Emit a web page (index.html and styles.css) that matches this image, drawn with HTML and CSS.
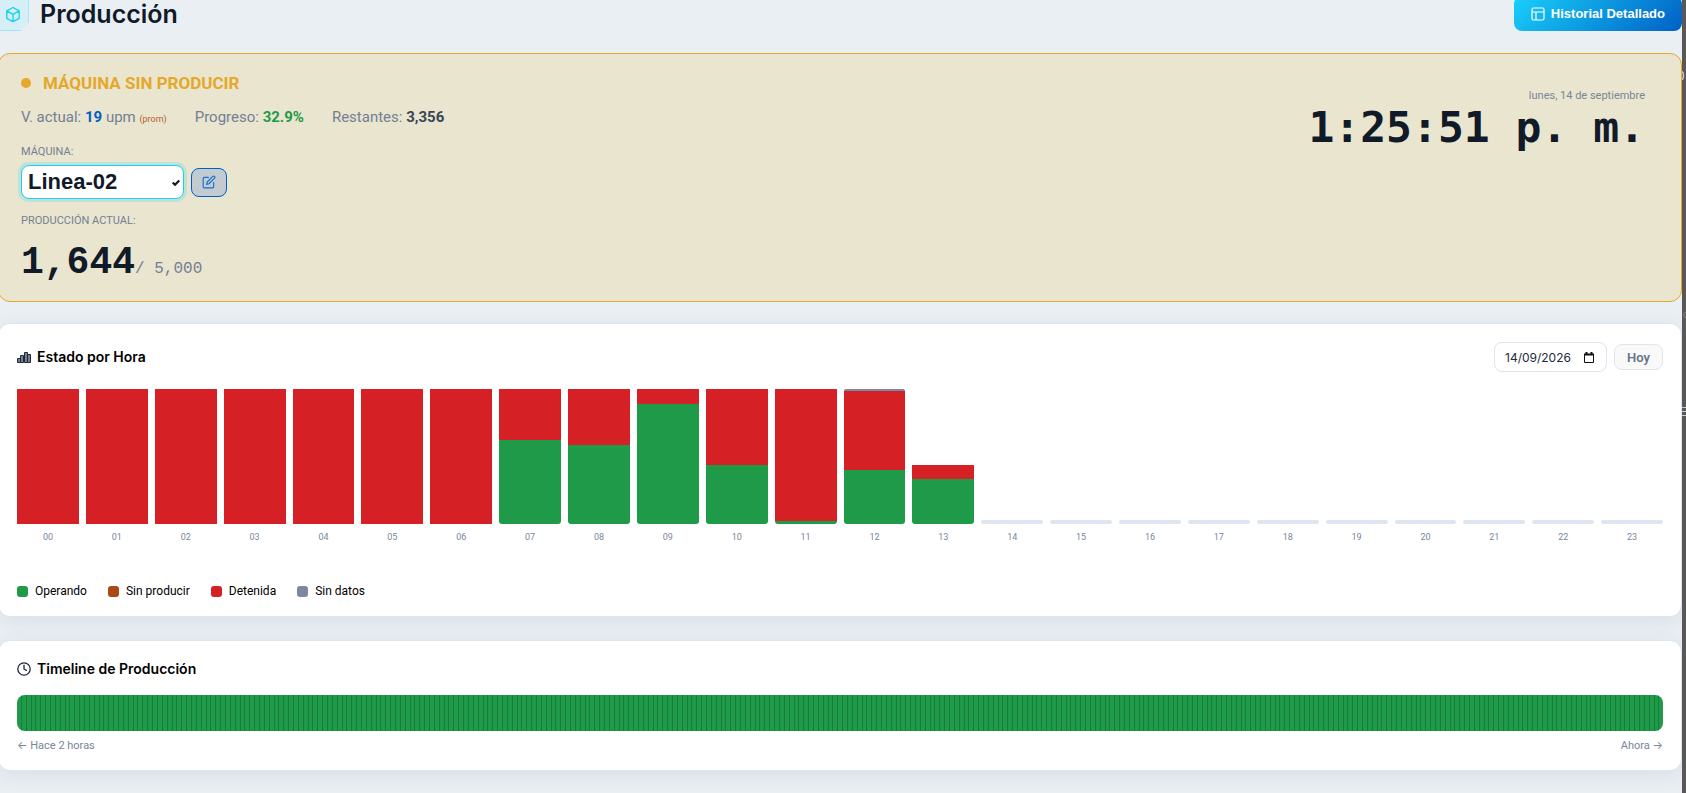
FILE: index.html
```html
<!DOCTYPE html>
<html lang="es">
<head>
<meta charset="utf-8">
<title>Producción</title>
<link rel="stylesheet" href="styles.css">
</head>
<body>
<main class="page">
  <header class="topbar">
    <div class="brand">
      <svg class="brand-icon" width="38" height="38" viewBox="0 0 38 38" fill="none" aria-hidden="true">
        <path d="M8 .5H37.5V30L30 37.5H.5V8z" fill="#d6eef5"/>
        <path d="M8 .5H37.5V30M30 37.5H.5V8" stroke="#a2e6f5"/>
        <g stroke="#1ad0f5" stroke-width="1.4" stroke-linejoin="round" stroke-linecap="round">
          <path d="M22 14.500l6.200 3.400v7.400L22 28.600l-6.200-3.300v-7.400zM15.800 17.900L22 21.400l6.200-3.500M22 21.400v7.200"/>
        </g>
      </svg>
      <h1>Producción</h1>
    </div>
    <a class="history" href="#historial">
      <svg width="14" height="14" viewBox="0 0 14 14" fill="none" stroke="currentColor" stroke-width="1.2" aria-hidden="true"><rect x="1" y="1" width="12" height="12" rx="1.5"/><path d="M1 5h12M5 5v8"/></svg>
      Historial Detallado
    </a>
  </header>

  <section class="card status">
    <div class="status-main">
      <p class="state"><span class="dot"></span>MÁQUINA SIN PRODUCIR</p>
      <div class="stats">
        <span>V. actual: <b class="blue">19</b> upm <small>(prom)</small></span>
        <span>Progreso: <b class="green">32.9%</b></span>
        <span>Restantes: <b class="dark">3,356</b></span>
      </div>
      <label class="caption" for="machine">MÁQUINA:</label>
      <div class="machine">
        <div class="select-wrap">
          <select id="machine"><option>Linea-02</option></select>
          <svg class="tick" width="8" height="8" viewBox="0 0 8 8" fill="none" stroke="#0c1622" stroke-width="2" aria-hidden="true"><path d="M.7 3.5L3 5.8 7.3 1.5"/></svg>
        </div>
        <button class="edit" type="button" aria-label="Editar máquina">
          <svg width="14" height="14" viewBox="0 0 24 24" fill="none" stroke="currentColor" stroke-width="2" stroke-linecap="round" stroke-linejoin="round" aria-hidden="true"><path d="M11 4H4a2 2 0 0 0-2 2v14a2 2 0 0 0 2 2h14a2 2 0 0 0 2-2v-7"/><path d="M18.5 2.5a2.1 2.1 0 0 1 3 3L12 15l-4 1 1-4z"/></svg>
        </button>
      </div>
      <p class="caption">PRODUCCIÓN ACTUAL:</p>
      <p class="count"><strong>1,644</strong><span>/ 5,000</span></p>
    </div>
    <div class="clock">
      <p class="date">lunes, 14 de septiembre</p>
      <p class="time">1:25:51 p. m.</p>
    </div>
  </section>

  <section class="card hours">
    <div class="card-head">
      <h2>
        <svg width="14" height="14" viewBox="0 0 14 14" fill="#76808f" stroke="#1f2a3a" aria-hidden="true"><path d="M.5 8.5h3v4h-3zM3.500 5.500h3v7h-3zM7.500 2.500h3v10h-3zM10.500 4.500h3v8h-3z"/></svg>
        Estado por Hora
      </h2>
      <div class="filters">
        <div class="date-box">
          <input type="text" value="14/09/2026" aria-label="Fecha">
          <svg width="10" height="11" viewBox="0 0 10 11" fill="none" stroke="#111" aria-hidden="true"><path d="M.5 2v8.500h9V2"/><path d="M0 2.500h10M2.500 0v2M7.500 0v2" stroke-width="2"/></svg>
        </div>
        <button class="today" type="button">Hoy</button>
      </div>
    </div>
    <div class="chart" id="chart"></div>
    <ul class="legend">
      <li><i class="operando"></i>Operando</li>
      <li><i class="idle"></i>Sin producir</li>
      <li><i class="detenida"></i>Detenida</li>
      <li><i class="nodata"></i>Sin datos</li>
    </ul>
  </section>

  <section class="card timeline">
    <h2>
      <svg width="14" height="14" viewBox="0 0 14 14" fill="none" stroke="#1f2a3a" stroke-width="1.3" stroke-linecap="round" aria-hidden="true"><circle cx="7" cy="7" r="6.200"/><path d="M7 3.200V7l2.300 1.400"/></svg>
      Timeline de Producción
    </h2>
    <div class="track" id="track"></div>
    <div class="range"><span><span class="arrow">←</span> Hace 2 horas</span><span>Ahora <span class="arrow">→</span></span></div>
  </section>
</main>
<aside class="edge">
  <svg width="4" height="430" viewBox="0 0 4 430" fill="none" stroke="#c9c9c7" aria-hidden="true">
    <path d="M0 71.500c2 1 2 7 0 8" stroke-width="1.500"/>
    <path d="M4 312.500c-3 0-3 5 0 5" stroke="#8d8c89"/>
    <path d="M0 407.500h4M0 411.500h4M0 415.500h4"/>
  </svg>
</aside>
<script src="app.js"></script>
</body>
</html>
```
FILE: styles.css
```css
* { box-sizing: border-box; }
body {
  margin: 0;
  display: flex;
  min-height: 100vh;
  overflow: hidden;
  background: #eaeff4;
  color: #000;
  font-family: Roboto, "Noto Sans", sans-serif;
}
h1, h2, p, ul { margin: 0; padding: 0; }
.page {
  flex: 1;
  min-width: 0;
  margin-left: -2px;
  display: flex;
  flex-direction: column;
}
.edge { width: 4px; background: #595855; }
.edge svg { display: block; }
.topbar {
  display: flex;
  justify-content: space-between;
  align-items: flex-end;
  height: 31px;
  margin-bottom: 22px;
}
.brand { display: flex; align-items: flex-end; gap: 11px; margin-left: -7px; }
.brand-icon { display: block; }
h1 { font: 600 25px/34px Inter, sans-serif; color: #101a28; }
.history {
  display: flex;
  align-items: center;
  gap: 6px;
  height: 35px;
  padding: 0 17px;
  border-radius: 8px;
  background: linear-gradient(135deg, #19d0fb, #0060c4);
  color: #fff;
  font: bold 13px "Liberation Sans", sans-serif;
  text-decoration: none;
}
.card {
  border: 1px solid #dde5ee;
  border-radius: 12px;
  background: #fff;
  padding: 18px;
  box-shadow: 0 4px 20px rgba(30, 50, 90, .09);
}
.status {
  display: flex;
  justify-content: space-between;
  margin-bottom: 21px;
  padding: 18px 36px 8px 22px;
  border-color: #e5a829;
  background: #e9e5cf;
  box-shadow: none;
}
.state {
  display: flex;
  align-items: center;
  gap: 12px;
  height: 22px;
  color: #e5a829;
  font-weight: 700;
  font-size: 17px;
}
.dot { width: 10px; height: 10px; border-radius: 50%; background: #e5a829; }
.stats {
  display: flex;
  gap: 28px;
  margin-top: 12px;
  line-height: 22px;
  font-size: 15px;
  color: #748094;
}
.stats small { font-size: 9px; color: #b5602f; }
.blue { color: #0060c4; }
.green { color: #1f9a48; }
.dark { color: #3a4555; }
.caption {
  display: block;
  margin-top: 14px;
  line-height: 16px;
  font-size: 11px;
  color: #748094;
}
.machine { display: flex; align-items: center; gap: 7px; margin-top: 5px; }
.select-wrap { position: relative; }
.select-wrap select {
  appearance: none;
  display: block;
  width: 163px;
  height: 34px;
  padding: 0 6px 2px;
  border: 1px solid #19d0f5;
  border-radius: 8px;
  background: #fff;
  box-shadow: 0 0 0 3px rgba(25, 208, 245, .2);
  color: #101a28;
  font: bold 22px "Liberation Sans", sans-serif;
}
.tick { position: absolute; right: 4px; top: 14px; pointer-events: none; }
.edit {
  display: grid;
  place-items: center;
  width: 36px;
  height: 29px;
  padding: 0;
  border: 1px solid #0060c4;
  border-radius: 8px;
  background: #c3cbd2;
  color: #1a70c8;
}
.count {
  display: flex;
  align-items: baseline;
  margin-top: 10px;
  line-height: 48px;
  font-family: "Liberation Mono", monospace;
  color: #101a28;
}
.count strong { font-size: 38px; }
.count span { font-size: 16px; color: #748094; }
.clock { padding-top: 16px; text-align: right; }
.date { font-size: 11px; line-height: 16px; color: #7a8598; }
.time { font: bold 43px/46px "DejaVu Sans Mono", monospace; color: #101a28; }
h2 {
  display: flex;
  align-items: center;
  gap: 6px;
  font: 600 14px/20px Inter, sans-serif;
}
.hours { margin-bottom: 23px; padding-bottom: 17px; }
.card-head { display: flex; justify-content: space-between; align-items: center; height: 30px; }
.filters { display: flex; align-items: center; gap: 7px; }
.date-box {
  display: flex;
  align-items: center;
  width: 113px;
  height: 30px;
  padding: 0 12px 0 10px;
  border: 1px solid #dde5ee;
  border-radius: 8px;
}
.date-box input {
  min-width: 0;
  flex: 1;
  padding: 0;
  border: 0;
  background: none;
  color: #202b3b;
  font: 12px Inter, sans-serif;
}
.today {
  width: 49px;
  height: 26px;
  padding: 0;
  border: 1px solid #dde5ee;
  border-radius: 8px;
  background: #f9f9fa;
  color: #67758c;
  font: 600 13px Roboto, sans-serif;
}
.chart { display: flex; gap: 7px; margin-top: 17px; }
.hour { flex: 1; text-align: center; font-size: 9px; line-height: 14px; color: #78869b; }
.stack {
  display: flex;
  flex-direction: column;
  justify-content: flex-end;
  height: 135px;
  margin-bottom: 6px;
}
.empty { height: 4px; border-radius: 2px; background: #dde5ee; }
.operando { background: #1f9a48; }
.idle { background: #ab4818; }
.detenida { background: #d52126; }
.nodata { background: #7a88a0; }
.stack .operando { border-radius: 0 0 3px 3px; }
.stack .nodata { border-radius: 3px 3px 0 0; }
.legend {
  display: flex;
  gap: 21px;
  margin-top: 39px;
  list-style: none;
  font-size: 12px;
  line-height: 16px;
}
.legend li { display: flex; align-items: center; gap: 7px; }
.legend i { width: 11px; height: 11px; border-radius: 3px; }
.timeline { padding-bottom: 16px; }
.track {
  display: flex;
  height: 36px;
  margin-top: 16px;
  border-radius: 8px;
  overflow: hidden;
}
.segment { flex: 1; background: #1f9a48; border-right: 1px solid #187c3b; }
.segment:last-child { border: 0; }
.range {
  display: flex;
  justify-content: space-between;
  margin-top: 6px;
  line-height: 16px;
  font-size: 11px;
  color: #78869b;
}
.arrow { font-family: Inter, sans-serif; }
```
FILE: app.js
```js
// Share of each hour by state, listed from the top of the bar to its base.
const full = [["detenida", 100]];
const hours = [
  full, full, full, full, full, full, full,
  [["detenida", 37.8], ["operando", 62.2]],
  [["detenida", 41.5], ["operando", 58.5]],
  [["detenida", 11.1], ["operando", 88.9]],
  [["detenida", 56.3], ["operando", 43.7]],
  [["detenida", 97.8], ["operando", 2.2]],
  [["nodata", 1.5], ["detenida", 58.5], ["operando", 40]],
  [["detenida", 10.4], ["operando", 33.3]]
];
const chart = document.getElementById("chart");
for (let h = 0; h < 24; h++) {
  const parts = hours[h]
    ? hours[h].map(([kind, share]) => `<div class="${kind}" style="height:${share}%"></div>`).join("")
    : '<div class="empty"></div>';
  const column = document.createElement("div");
  column.className = "hour";
  column.innerHTML = `<div class="stack">${parts}</div>${String(h).padStart(2, "0")}`;
  chart.append(column);
}

const track = document.getElementById("track");
for (let i = 0; i < 339; i++) {
  const segment = document.createElement("div");
  segment.className = "segment";
  track.append(segment);
}
```
